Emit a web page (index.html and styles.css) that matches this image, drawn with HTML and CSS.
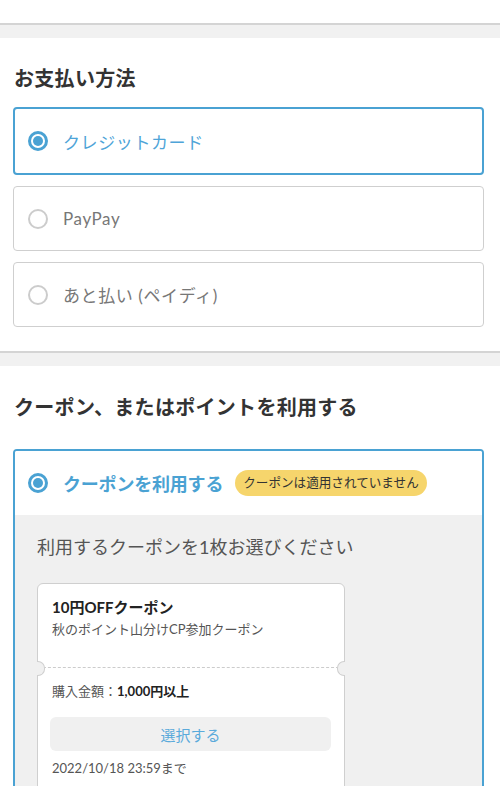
FILE: index.html
```html
<!DOCTYPE html>
<html lang="ja">
<head>
<meta charset="utf-8">
<link rel="stylesheet" href="styles.css">
</head>
<body>
<div class="top"></div>
<div class="band"></div>
<section class="section first">
  <h2 class="heading">お支払い方法</h2>
  <div class="options">
    <div class="option selected"><span class="radio on"></span><span class="opt-text">クレジットカード</span></div>
    <div class="option"><span class="radio"></span><span class="opt-text">PayPay</span></div>
    <div class="option"><span class="radio"></span><span class="opt-text">あと払い (ペイディ)</span></div>
  </div>
</section>
<div class="band"></div>
<section class="section second">
  <h2 class="heading">クーポン、またはポイントを利用する</h2>
  <div class="coupon-box">
    <div class="coupon-head">
      <span class="radio on"></span>
      <span class="coupon-label">クーポンを利用する</span>
      <span class="badge">クーポンは適用されていません</span>
    </div>
    <div class="coupon-body">
      <p class="choose">利用するクーポンを1枚お選びください</p>
      <div class="card">
        <div class="card-top">
          <div class="card-title">10円OFFクーポン</div>
          <div class="card-sub">秋のポイント山分けCP参加クーポン</div>
        </div>
        <div class="card-bottom">
          <div class="cond">購入金額：<b>1,000円以上</b></div>
          <div class="select-btn">選択する</div>
          <div class="date">2022/10/18 23:59まで</div>
        </div>
      </div>
    </div>
  </div>
</section>
</body>
</html>
```

FILE: styles.css
```css
* { box-sizing: border-box; }
html, body { margin: 0; padding: 0; background: #fff; }
body {
  width: 500px;
  height: 786px;
  overflow: hidden;
  font-family: Lato, "Noto Sans CJK JP", sans-serif;
  color: #333;
}
.top { height: 25px; background: #fff; border-bottom: 2px solid #d4d4d4; }
.band { height: 13px; background: #f1f1f1; }
.section { padding: 28px 16px 24px 13px; background: #fff; }
.section.first { border-bottom: 2px solid #d4d4d4; }
.section.second { padding-top: 29px; }
.heading {
  margin: 0 0 17px 1px;
  font-size: 20px;
  line-height: 24px;
  font-weight: 700;
  color: #333;
  letter-spacing: 0.3px;
}
.second .heading { margin-bottom: 30px; }
.options { display: flex; flex-direction: column; gap: 11px; }
.option {
  height: 65px;
  border: 1px solid #cfcfcf;
  border-radius: 4px;
  display: flex;
  align-items: center;
  padding-left: 14px;
  gap: 15px;
}
.option.selected { height: 68px; border: 2px solid #4aa2d3; padding-left: 13px; }
.radio {
  width: 20px; height: 20px;
  border-radius: 50%;
  border: 2px solid #cccccc;
  flex: none;
  position: relative;
  background: #fff;
}
.radio.on { border: 3px solid #4aa2d3; }
.radio.on::after {
  content: "";
  position: absolute;
  left: 2px; top: 2px;
  width: 10px; height: 10px;
  border-radius: 50%;
  background: #4aa2d3;
}
.opt-text { font-size: 17px; letter-spacing: 0.6px; color: #777; }
.selected .opt-text { color: #4ea4d8; }
.coupon-box {
  border: 2px solid #4aa2d3;
  border-radius: 4px;
  overflow: hidden;
}
.coupon-head {
  height: 64px;
  display: flex;
  align-items: center;
  padding-left: 13px;
  gap: 15px;
  background: #fff;
}
.coupon-label { font-size: 18px; font-weight: 700; color: #4aa2d3; letter-spacing: -0.2px; }
.badge {
  margin-left: -3px;
  height: 26px;
  padding: 0 8px;
  border-radius: 13px;
  background: #f6d56c;
  font-size: 12.6px;
  line-height: 26px;
  color: #333;
}
.coupon-body { background: #f0f0f0; padding: 20px 22px 30px 22px; }
.choose { margin: 0 0 24px 0; font-size: 18px; line-height: 24px; color: #555; }
.card {
  width: 308px;
  background: #fff;
  border: 1px solid #cfcfcf;
  border-radius: 6px;
}
.card-top { padding: 13px 13px 29px 14px; }
.card-title { font-size: 15px; font-weight: 700; line-height: 20px; color: #222; }
.card-sub { margin-top: 3px; font-size: 13px; line-height: 18px; color: #555; }
.card-bottom {
  position: relative;
  border-top: 1px dashed #cccccc;
  padding: 14px 13px 20px 12px;
}
.card-bottom::before, .card-bottom::after {
  content: "";
  position: absolute;
  top: -7px;
  width: 7px; height: 13px;
  background: #f0f0f0;
  border: 1px solid #cfcfcf;
}
.card-bottom::before { left: -1px; border-left: none; border-radius: 0 7px 7px 0; }
.card-bottom::after { right: -1px; border-right: none; border-radius: 7px 0 0 7px; }
.cond { font-size: 13px; line-height: 18px; color: #555; padding-left: 2px; }
.cond b { color: #222; }
.select-btn {
  margin-top: 17px;
  height: 34px;
  border-radius: 6px;
  background: #f0f0f0;
  color: #5aaadb;
  font-size: 15px;
  display: flex;
  align-items: center;
  justify-content: center;
}
.date { margin-top: 8px; font-size: 13px; line-height: 18px; color: #555; padding-left: 2px; }
```
